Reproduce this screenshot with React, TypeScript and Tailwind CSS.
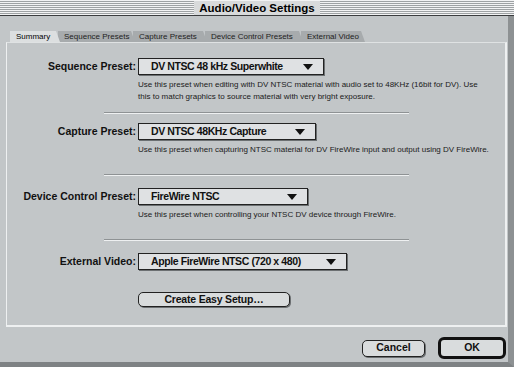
import React from 'react';

const small = "font-['Liberation_Sans',Arial,sans-serif] text-[8px] leading-[12px] text-[#1a1a1a]";
const bold = "font-['Liberation_Sans',Arial,sans-serif] font-bold text-[10.5px] text-[#111]";

function Popup({ label, width }: { label: string; width: number }) {
  return (
    <div
      className="flex h-[17px] items-center justify-between border border-[#222] bg-[#dfe1e3] pl-[12px] pr-[10px] shadow-[1px_1px_0_#6c7072]"
      style={{ width }}
    >
      <span className={`${bold} tracking-[-0.4px]`}>{label}</span>
      <svg width="10" height="6" viewBox="0 0 10 6">
        <path d="M0 0h10L5 6z" fill="#111" />
      </svg>
    </div>
  );
}

function Row({ label, value, width, desc }: { label: string; value: string; width: number; desc: string[] }) {
  return (
    <div className="flex flex-col">
      <div className="flex items-center">
        <div className={`${bold} w-[131px] pr-[2px] text-right`}>{label}</div>
        <Popup label={value} width={width} />
      </div>
      {desc.length > 0 && (
        <div className={`${small} ml-[131px] mt-[4px]`}>
          {desc.map((d) => (
            <div key={d}>{d}</div>
          ))}
        </div>
      )}
    </div>
  );
}

function Sep() {
  return <div className="ml-[97px] h-[2px] w-[305px] border-t border-[#8e9294] bg-[#eef0f1]" />;
}

const tabs = [
  { name: 'Summary', w: 50 },
  { name: 'Sequence Presets', w: 77 },
  { name: 'Capture Presets', w: 74 },
  { name: 'Device Control Presets', w: 98 },
  { name: 'External Video', w: 64 },
];

export default function App() {
  return (
    <div className="relative flex h-[367px] w-[514px] flex-col overflow-hidden bg-[#c2c6c8]">
      {/* title bar */}
      <div className="relative flex h-[16px] items-center justify-center border-b border-[#3a3c3e] bg-[repeating-linear-gradient(180deg,#f2f3f4_0px,#f2f3f4_1px,#9ea2a4_1px,#9ea2a4_2px)]">
        <span className="bg-[#d8dadb] px-[5px] font-['Liberation_Sans',Arial,sans-serif] text-[11.5px] font-bold leading-[14px] text-black">
          Audio/Video Settings
        </span>
      </div>

      <div className="flex flex-1 border-r-[6px] border-b-[5px] border-r-[#8d9193] border-b-[#7e8284] pl-[6px] pr-[1px]">
        <div className="flex flex-1 flex-col">
          {/* tabs */}
          <div className="mt-[14px] flex h-[12px] items-end pl-[4px]">
            {tabs.map((t, i) => (
              <div
                key={t.name}
                className={`${small} -mr-[2px] flex h-[11px] items-center pl-[6px] leading-[11px] [clip-path:polygon(0_0,calc(100%-4px)_0,100%_100%,0_100%)] ${
                  i === 0 ? 'z-10 bg-[#dcdfe0] text-black' : 'bg-[#a7abad] text-[#222]'
                }`}
                style={{ width: t.w }}
              >
                {t.name}
              </div>
            ))}
          </div>

          {/* panel */}
          <div className="flex h-[285px] flex-col border-l border-t border-r-2 border-b-2 border-l-[#eef0f1] border-t-[#dfe2e3] border-r-[#eef0f1] border-b-[#eef0f1] pt-[15px]">
            <Row
              label="Sequence Preset:"
              value="DV NTSC 48 kHz Superwhite"
              width={186}
              desc={[
                'Use this preset when editing with DV NTSC material with audio set to 48KHz (16bit for DV). Use',
                'this to match graphics to source material with very bright exposure.',
              ]}
            />
            <div className="mt-[9px]">
              <Sep />
            </div>
            <div className="mt-[9px]">
              <Row
                label="Capture Preset:"
                value="DV NTSC 48KHz Capture"
                width={178}
                desc={['Use this preset when capturing NTSC material for DV FireWire input and output using DV FireWire.']}
              />
            </div>
            <div className="mt-[18px]">
              <Sep />
            </div>
            <div className="mt-[12px]">
              <Row
                label="Device Control Preset:"
                value="FireWire NTSC"
                width={170}
                desc={['Use this preset when controlling your NTSC DV device through FireWire.']}
              />
            </div>
            <div className="mt-[18px]">
              <Sep />
            </div>
            <div className="mt-[12px]">
              <Row label="External Video:" value="Apple FireWire NTSC (720 x 480)" width={209} desc={[]} />
            </div>
            <div className="ml-[131px] mt-[22px] flex h-[15px] w-[152px] items-center justify-center rounded-[5px] border border-[#222] bg-[#d9dcdd] shadow-[1px_1px_0_#6c7072]">
              <span className={`${bold} tracking-[-0.2px]`}>Create Easy Setup…</span>
            </div>
          </div>

          {/* buttons */}
          <div className="mt-[10px] flex items-center justify-end gap-[13px] pr-[1px]">
            <div className="flex h-[17px] w-[63px] items-center justify-center rounded-[5px] border border-[#222] bg-[#d9dcdd] shadow-[1px_1px_0_#6c7072]">
              <span className={bold}>Cancel</span>
            </div>
            <div className="flex h-[22px] w-[68px] items-center justify-center rounded-[6px] border-[3px] border-[#111] bg-[#d9dcdd]">
              <span className={bold}>OK</span>
            </div>
          </div>
        </div>
      </div>
    </div>
  );
}
